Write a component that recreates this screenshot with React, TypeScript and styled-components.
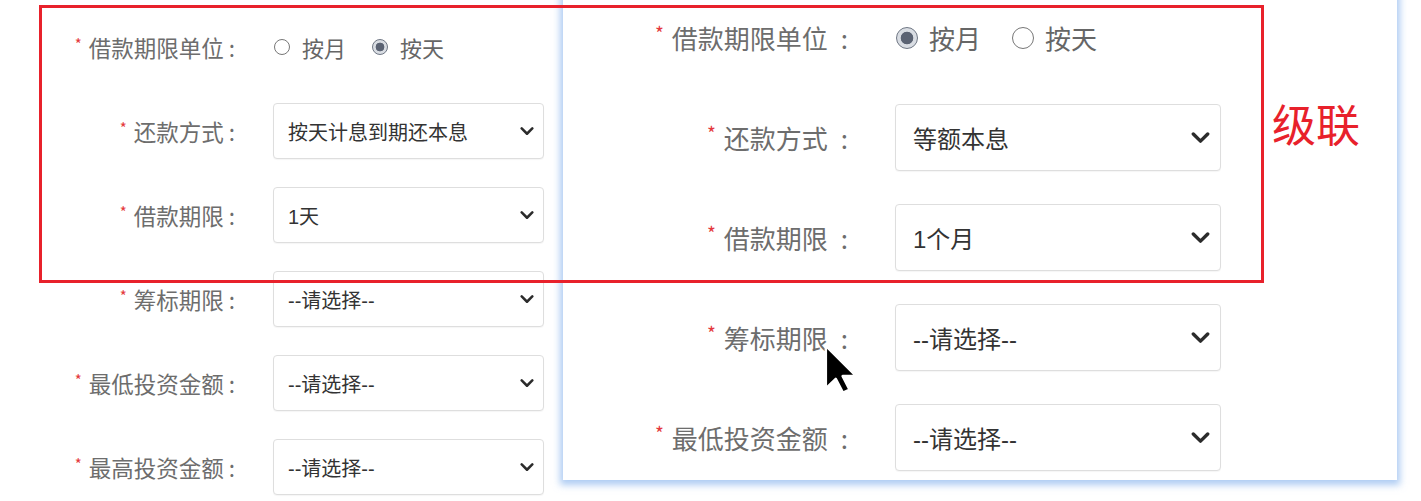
import React from "react";
import styled, { createGlobalStyle } from "styled-components";

type Size = "sm" | "lg";

// measurements for the small form and the magnified copy of it
const dims = {
  sm: { label: 22.5, radio: 22, value: 20, star: 15, starGap: 7, starTop: 17, colonL: 5, colonR: 2, row: 56, gap: 28, top: 19, labelCol: 237, colGap: 36, ctrl: 271, pad: 14, chevW: 14, chevRight: 9, dot: 16, dotGap: 12, optGap: 26 },
  lg: { label: 26, radio: 26, value: 24, star: 19, starGap: 8, starTop: 19, colonL: 13, colonR: 2, row: 67, gap: 33, top: 24, labelCol: 287, colGap: 45, ctrl: 326, pad: 17, chevW: 19, chevRight: 10, dot: 22, dotGap: 11, optGap: 31 },
};

const GlobalStyle = createGlobalStyle`
  html, body {
    margin: 0;
    padding: 0;
    background: #fff;
    overflow: hidden;
  }
  body {
    font-family: "Noto Sans CJK SC", "Liberation Sans", sans-serif;
  }
`;

const Page = styled.div`
  position: relative;
  width: 1421px;
  height: 501px;
  display: flex;
  align-items: flex-start;
  overflow: hidden;
`;

const LeftArea = styled.div`
  width: 563px;
  flex-shrink: 0;
`;

const Panel = styled.div`
  width: 834px;
  flex-shrink: 0;
  margin-top: -20px;
  padding-bottom: 9px;
  background: #fff;
  box-shadow: 0 2px 7px 3px rgba(120, 170, 235, 0.6);
`;

const FormGrid = styled.div<{ $size: Size }>`
  display: grid;
  grid-template-columns: ${(p) => dims[p.$size].labelCol}px ${(p) => dims[p.$size].ctrl}px;
  grid-auto-rows: ${(p) => dims[p.$size].row}px;
  column-gap: ${(p) => dims[p.$size].colGap}px;
  row-gap: ${(p) => dims[p.$size].gap}px;
  padding-top: ${(p) => dims[p.$size].top}px;
`;

const Label = styled.div<{ $size: Size }>`
  display: flex;
  align-items: center;
  justify-content: flex-end;
  font-size: ${(p) => dims[p.$size].label}px;
  color: #6d6d6d;
  white-space: nowrap;
`;

const Star = styled.span<{ $size: Size }>`
  color: #e4393c;
  font-size: ${(p) => dims[p.$size].star}px;
  margin-right: ${(p) => dims[p.$size].starGap}px;
  align-self: flex-start;
  margin-top: ${(p) => dims[p.$size].starTop}px;
  line-height: 1;
`;

const Colon = styled.span<{ $size: Size }>`
  margin-left: ${(p) => dims[p.$size].colonL}px;
  margin-right: ${(p) => dims[p.$size].colonR}px;
`;

const RadioGroup = styled.div<{ $size: Size }>`
  display: flex;
  align-items: center;
  gap: ${(p) => dims[p.$size].optGap}px;
  padding-left: 1px;
`;

const RadioOption = styled.label<{ $size: Size }>`
  display: flex;
  align-items: center;
  gap: ${(p) => dims[p.$size].dotGap}px;
  font-size: ${(p) => dims[p.$size].radio}px;
  color: #666;
`;

const Dot = styled.span<{ $size: Size; $on: boolean }>`
  box-sizing: border-box;
  width: ${(p) => dims[p.$size].dot}px;
  height: ${(p) => dims[p.$size].dot}px;
  border-radius: 50%;
  border: 1px solid ${(p) => (p.$on ? "#6f7784" : "#777")};
  background: ${(p) =>
    p.$on ? "radial-gradient(circle, #5b6373 0 42%, #d9dde3 47% 100%)" : "#fff"};
`;

const Select = styled.div<{ $size: Size }>`
  box-sizing: border-box;
  height: 100%;
  display: flex;
  align-items: center;
  justify-content: space-between;
  padding: 0 ${(p) => dims[p.$size].chevRight}px 0 ${(p) => dims[p.$size].pad}px;
  border: 1px solid #dedede;
  border-radius: 4px;
  background: #fff;
  box-shadow: 0 1px 1px rgba(0, 0, 0, 0.04);
  font-family: "Liberation Sans", "Noto Sans CJK SC", sans-serif;
  font-size: ${(p) => dims[p.$size].value}px;
  color: #333;
`;

const Chevron = ({ size }: { size: Size }) => {
  const w = dims[size].chevW;
  return (
    <svg width={w} height={w * 0.62} viewBox="0 0 14 9">
      <polyline points="1.5,1.5 7,7 12.5,1.5" fill="none" stroke="#2b2b2b" strokeWidth="2.6" strokeLinecap="round" strokeLinejoin="round" />
    </svg>
  );
};

const Frame = styled.div`
  position: absolute;
  left: 39px;
  top: 5px;
  width: 1225px;
  height: 278px;
  box-sizing: border-box;
  border: 3px solid #e8212b;
  pointer-events: none;
`;

const Note = styled.div`
  position: absolute;
  left: 1272px;
  top: 101px;
  font-size: 44px;
  line-height: 44px;
  color: #e8212b;
  font-family: "Noto Sans CJK SC", sans-serif;
`;

const Pointer = styled.svg`
  position: absolute;
  left: 822px;
  top: 343px;
`;

type Row = { label: string; value: string };

const leftRows: Row[] = [
  { label: "还款方式", value: "按天计息到期还本息" },
  { label: "借款期限", value: "1天" },
  { label: "筹标期限", value: "--请选择--" },
  { label: "最低投资金额", value: "--请选择--" },
  { label: "最高投资金额", value: "--请选择--" },
];

const rightRows: Row[] = [
  { label: "还款方式", value: "等额本息" },
  { label: "借款期限", value: "1个月" },
  { label: "筹标期限", value: "--请选择--" },
  { label: "最低投资金额", value: "--请选择--" },
];

const LoanForm: React.FC<{ size: Size; unit: "month" | "day"; rows: Row[] }> = ({ size, unit, rows }) => (
  <FormGrid $size={size}>
    <Label $size={size}>
      <Star $size={size}>*</Star>借款期限单位<Colon $size={size}>:</Colon>
    </Label>
    <RadioGroup $size={size}>
      <RadioOption $size={size}>
        <Dot $size={size} $on={unit === "month"} />
        按月
      </RadioOption>
      <RadioOption $size={size}>
        <Dot $size={size} $on={unit === "day"} />
        按天
      </RadioOption>
    </RadioGroup>
    {rows.map((r) => (
      <React.Fragment key={r.label}>
        <Label $size={size}>
          <Star $size={size}>*</Star>
          {r.label}
          <Colon $size={size}>:</Colon>
        </Label>
        <Select $size={size}>
          <span>{r.value}</span>
          <Chevron size={size} />
        </Select>
      </React.Fragment>
    ))}
  </FormGrid>
);

export default function App() {
  return (
    <Page>
      <GlobalStyle />
      <LeftArea>
        <LoanForm size="sm" unit="day" rows={leftRows} />
      </LeftArea>
      <Panel>
        <LoanForm size="lg" unit="month" rows={rightRows} />
      </Panel>
      <Frame />
      <Note>级联</Note>
      <Pointer width="38" height="51" viewBox="0 0 13 18.5">
        <path d="M1,1 L1,16.5 L4.6,13 L7.2,18 L9.6,16.9 L7.1,12 L12,12 Z" fill="#000" stroke="#fff" strokeWidth="0.9" strokeLinejoin="round" />
      </Pointer>
    </Page>
  );
}
